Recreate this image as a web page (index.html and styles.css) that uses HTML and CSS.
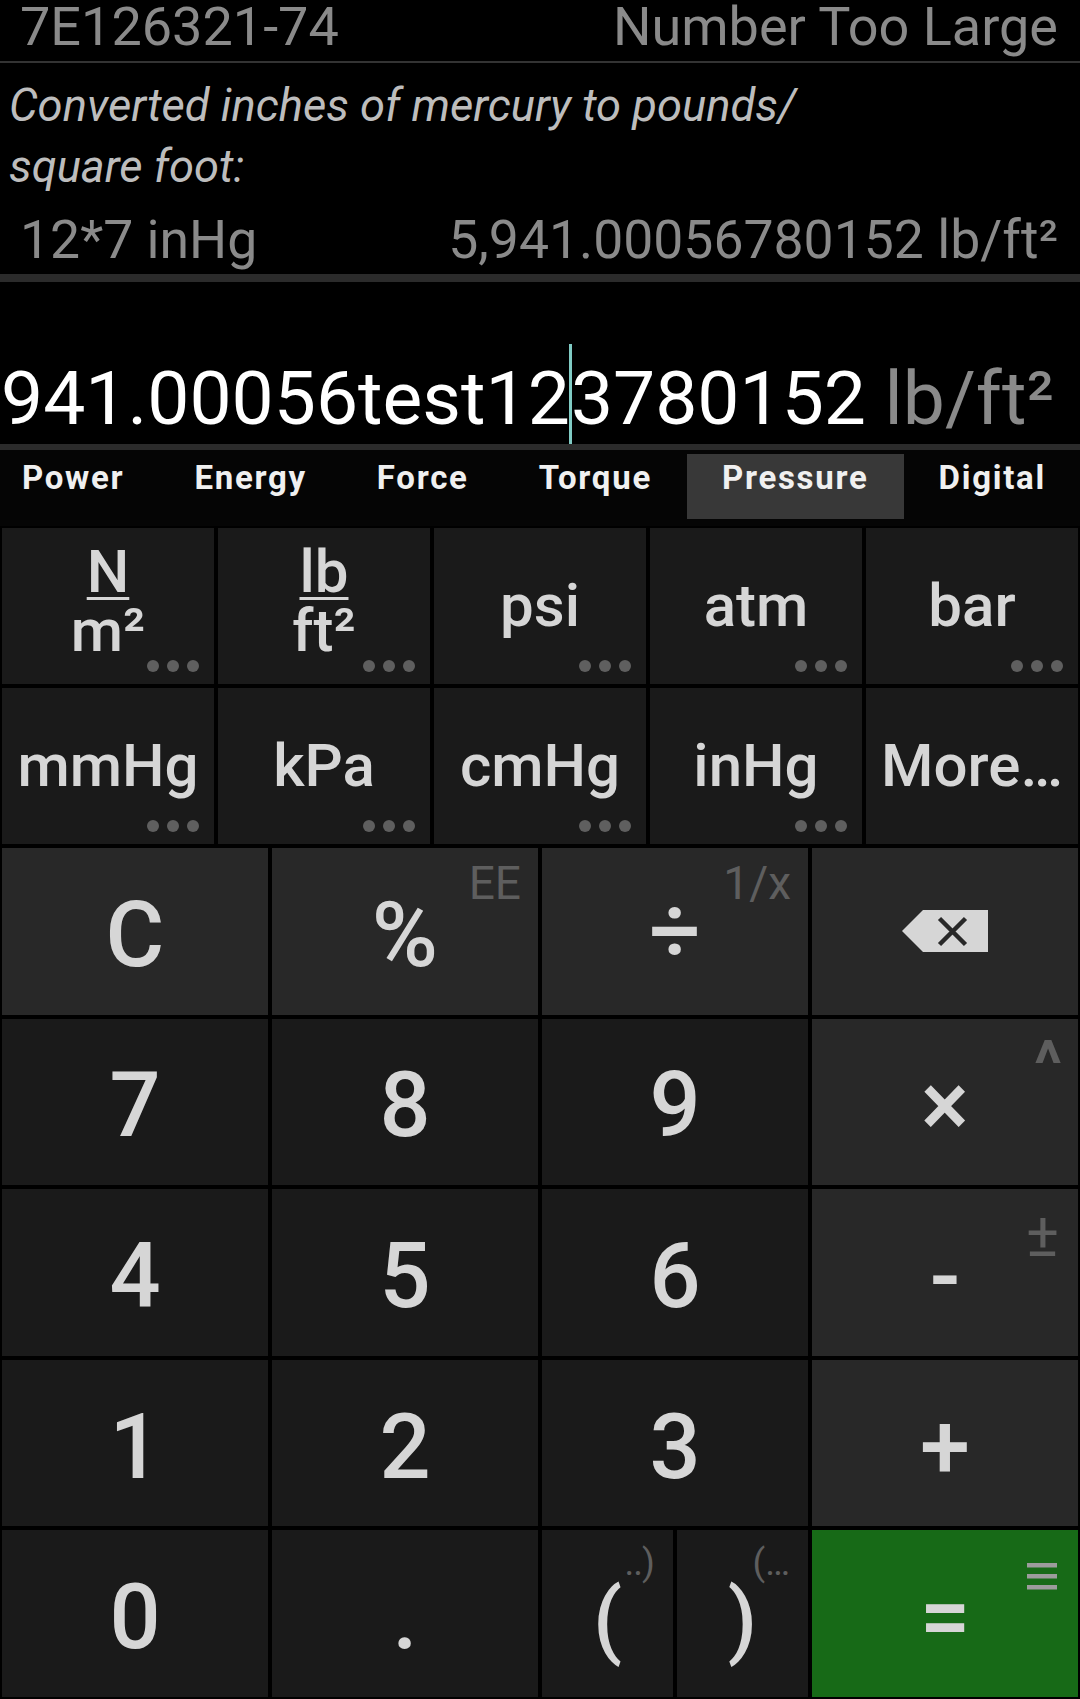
FILE: index.html
```html
<!DOCTYPE html>
<html lang="en">
<head>
<meta charset="utf-8">
<title>Unit Converter Calculator</title>
<link rel="stylesheet" href="styles.css">
</head>
<body>
<div class="app">
  <section class="history">
    <div class="hist-line hist-top">
      <span>7E126321-74</span>
      <span>Number Too Large</span>
    </div>
    <p class="desc">Converted inches of mercury to pounds/ square foot:</p>
    <div class="hist-line hist-result">
      <span>12*7 inHg</span>
      <span>5,941.00056780152 lb/ft²</span>
    </div>
  </section>

  <div class="display">
    <div class="expr"><span class="num">941.00056test12<span class="caret"></span>3780152</span> <span class="unit">lb/ft²</span></div>
  </div>

  <nav class="tabs">
    <span class="tab">Power</span>
    <span class="tab">Energy</span>
    <span class="tab">Force</span>
    <span class="tab">Torque</span>
    <span class="tab active">Pressure</span>
    <span class="tab">Digital</span>
  </nav>

  <div class="pad">
    <div class="units">
      <div class="ubtn"><span class="frac"><span class="numr">N</span><span class="den">m²</span></span><i class="dots"><b></b><b></b><b></b></i></div>
      <div class="ubtn"><span class="frac"><span class="numr">lb</span><span class="den">ft²</span></span><i class="dots"><b></b><b></b><b></b></i></div>
      <div class="ubtn">psi<i class="dots"><b></b><b></b><b></b></i></div>
      <div class="ubtn">atm<i class="dots"><b></b><b></b><b></b></i></div>
      <div class="ubtn">bar<i class="dots"><b></b><b></b><b></b></i></div>
      <div class="ubtn">mmHg<i class="dots"><b></b><b></b><b></b></i></div>
      <div class="ubtn">kPa<i class="dots"><b></b><b></b><b></b></i></div>
      <div class="ubtn">cmHg<i class="dots"><b></b><b></b><b></b></i></div>
      <div class="ubtn">inHg<i class="dots"><b></b><b></b><b></b></i></div>
      <div class="ubtn">More…</div>
    </div>

    <div class="keys">
      <div class="key op">C</div>
      <div class="key op"><span class="main">%</span><span class="alt alt-ee">EE</span></div>
      <div class="key op div"><span class="main">÷</span><span class="alt alt-ee">1/x</span></div>
      <div class="key op back">
        <svg width="86" height="42" viewBox="0 0 86 42"><path d="M0 21 L21 0 H86 V42 H21 Z" fill="#d6d6d6"/><path d="M37.5 8.5 L63.5 34.5 M63.5 8.5 L37.5 34.5" stroke="#282828" stroke-width="4.5"/></svg>
      </div>

      <div class="key">7</div>
      <div class="key">8</div>
      <div class="key">9</div>
      <div class="key op"><span class="main">×</span><span class="alt alt-pow">^</span></div>

      <div class="key">4</div>
      <div class="key">5</div>
      <div class="key">6</div>
      <div class="key op"><span class="main">-</span><span class="alt alt-pm">±</span></div>

      <div class="key">1</div>
      <div class="key">2</div>
      <div class="key">3</div>
      <div class="key op">+</div>

      <div class="key">0</div>
      <div class="key">.</div>
      <div class="paren-pair">
        <div class="key paren"><span class="main">(</span><span class="alt alt-par"><span class="dd">..</span>)</span></div>
        <div class="key paren"><span class="main">)</span><span class="alt alt-par">(…</span></div>
      </div>
      <div class="key eq"><span class="main">=</span>
        <svg class="hist-icon" width="30" height="27" viewBox="0 0 30 27"><rect x="0" y="0" width="30" height="4.5" fill="#9c9c9c"/><rect x="0" y="11" width="30" height="4.5" fill="#9c9c9c"/><rect x="0" y="22" width="30" height="4.5" fill="#9c9c9c"/></svg>
      </div>
    </div>
  </div>
</div>
</body>
</html>
```

FILE: styles.css
```css
* { box-sizing: border-box; }

html, body {
  margin: 0;
  padding: 0;
  background: #000;
}

body {
  width: 1080px;
  height: 1699px;
  overflow: hidden;
  font-family: Roboto, "Liberation Sans", sans-serif;
}

.app {
  display: flex;
  flex-direction: column;
  height: 1699px;
}

/* ---------- history ---------- */
.history {
  height: 282px;
  flex: none;
  border-bottom: 8px solid #2b2b2b;
  overflow: hidden;
}

.hist-line {
  display: flex;
  justify-content: space-between;
  padding: 0 22px 0 20px;
  color: #8a8a8a;
  white-space: nowrap;
}

.hist-top {
  height: 63px;
  font-size: 54px;
  line-height: 53px;
  border-bottom: 2px solid #333;
}

.desc {
  margin: 12px 0 0;
  padding-left: 9px;
  max-width: 880px;
  font-size: 45.3px;
  font-style: italic;
  line-height: 61px;
  color: #bdbdbd;
}

.hist-result {
  margin-top: 13px;
  font-size: 53.5px;
  line-height: 60px;
}

/* ---------- main display ---------- */
.display {
  height: 168px;
  flex: none;
  display: flex;
  align-items: flex-end;
  justify-content: flex-end;
  padding-right: 26px;
  border-bottom: 6px solid #2b2b2b;
  overflow: hidden;
  white-space: nowrap;
}

.expr {
  font-size: 75px;
  color: #fff;
  line-height: normal;
}

.unit { color: #8a8a8a; }

.caret {
  display: inline-block;
  width: 3px;
  height: 100px;
  margin: 0 -1px;
  vertical-align: -20px;
  background: #80cbc4;
}

/* ---------- tabs ---------- */
.tabs {
  height: 76px;
  flex: none;
  display: flex;
  align-items: flex-start;
  margin-left: -13px;
  background: #050505;
  white-space: nowrap;
}

.tab {
  flex: none;
  height: 65px;
  margin-top: 4px;
  padding: 8px 35px 0;
  font-size: 33px;
  line-height: 31px;
  font-weight: 700;
  letter-spacing: 0.052em;
  color: #f0f0f0;
}

.tab.active { background: #383838; }

/* ---------- keypad ---------- */
.pad {
  flex: 1;
  display: flex;
  flex-direction: column;
  gap: 4px;
  padding: 2px;
}

.units {
  display: grid;
  grid-template-columns: repeat(5, 1fr);
  grid-auto-rows: 156px;
  gap: 4px;
}

.ubtn {
  position: relative;
  display: flex;
  align-items: center;
  justify-content: center;
  background: #1a1a1a;
  color: #d6d6d6;
  font-size: 60px;
  font-weight: 500;
  line-height: 1;
}

.frac {
  display: flex;
  flex-direction: column;
  align-items: center;
  padding-bottom: 10px;
}

.numr, .den {
  display: block;
  height: 59px;
  line-height: 59px;
}

.numr {
  text-decoration: underline;
  text-decoration-thickness: 3px;
  text-underline-offset: 5px;
}

.dots {
  position: absolute;
  right: 15px;
  bottom: 12px;
  display: flex;
  gap: 8px;
}

.dots b {
  width: 12px;
  height: 12px;
  border-radius: 50%;
  background: #5f5f5f;
}

.keys {
  flex: 1;
  display: grid;
  grid-template-columns: repeat(4, 1fr);
  grid-template-rows: repeat(5, 1fr);
  gap: 4px;
}

.key {
  position: relative;
  display: flex;
  align-items: center;
  justify-content: center;
  padding-top: 9px;
  background: #1a1a1a;
  color: #d6d6d6;
  font-size: 90px;
  font-weight: 500;
  line-height: 1;
}

.key.op { background: #282828; }
.key.eq { background: #176a17; }
.key.back { padding-top: 0; }
.key.div { padding-top: 1px; }
.key.paren { font-size: 84px; padding-top: 12px; }

.main {
  position: relative;
  z-index: 1;
}

.alt {
  position: absolute;
  color: #5e5e5e;
  font-weight: 400;
  line-height: 1;
}

.alt-ee {
  top: 12px;
  right: 17px;
  font-size: 46px;
}

.alt-pow {
  top: 14px;
  right: 16px;
  font-size: 64px;
  font-weight: 700;
}

.alt-pm {
  top: 15px;
  right: 19px;
  font-size: 62px;
}

.alt-par {
  top: 14px;
  right: 18px;
  font-size: 37px;
}

.dd { letter-spacing: -1px; }

.paren-pair {
  display: flex;
  gap: 4px;
}

.paren-pair .key { flex: 1; }

.hist-icon {
  position: absolute;
  top: 33px;
  right: 21px;
}
```
